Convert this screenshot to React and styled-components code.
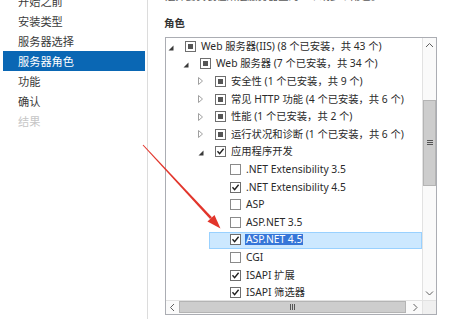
import React from "react";
import styled, { createGlobalStyle } from "styled-components";

const Global = createGlobalStyle`
  html, body { margin: 0; padding: 0; background: #ffffff; }
  body { overflow: hidden; font-family: "Noto Sans", "Noto Sans CJK SC", sans-serif; }
`;

const Page = styled.div`
  position: relative;
  width: 450px;
  height: 319px;
  overflow: hidden;
  display: flex;
  background: #fff;
`;

const Sidebar = styled.nav`
  width: 148px;
  flex: none;
  box-sizing: border-box;
  border-right: 1px solid #dcdcdc;
  padding: 0 2px 0 3px;
`;

const NavList = styled.ul`
  list-style: none;
  margin: -9px 0 0 0;
  padding: 0;
`;

const NavItem = styled.li`
  height: 20px;
  line-height: 20px;
  padding-left: 15px;
  font-family: "Noto Sans CJK SC", sans-serif;
  font-size: 11.2px;
  color: ${(p) => (p.$active ? "#ffffff" : p.$disabled ? "#c6c6c6" : "#3a3a3a")};
  background: ${(p) => (p.$active ? "#0a67b4" : "transparent")};
  white-space: nowrap;
`;

const Main = styled.main`
  flex: 1;
  min-width: 0;
  padding: 0 13px 0 17px;
  display: flex;
  flex-direction: column;
`;

const Desc = styled.div`
  margin-top: -11px;
  height: 14px;
  line-height: 14px;
  font-size: 10.3px;
  color: #5a5a5a;
  white-space: nowrap;
  overflow: hidden;
  font-family: "Noto Sans CJK SC", sans-serif;
`;

const Heading = styled.h3`
  margin: 12px 0 0 -1px;
  height: 16px;
  line-height: 16px;
  font-size: 10.5px;
  font-weight: 700;
  color: #333;
  font-family: "Noto Sans CJK SC", sans-serif;
`;

const TreeBox = styled.div`
  margin-top: 6px;
  width: 272px;
  height: 278px;
  box-sizing: border-box;
  border: 1px solid #abadb3;
  display: grid;
  grid-template-columns: 1fr 14px;
  grid-template-rows: 1fr 14px;
  overflow: hidden;
`;

const TreeView = styled.div`
  overflow: hidden;
  min-width: 0;
  min-height: 0;
`;

const Row = styled.div`
  height: 17.6px;
  box-sizing: border-box;
  display: flex;
  align-items: center;
  padding-bottom: 2px;
  margin-left: ${(p) => p.$level * 15 - 2}px;
  border: 1px solid ${(p) => (p.$selected ? "#99d1ff" : "transparent")};
  background: ${(p) => (p.$selected ? "#cce8ff" : "transparent")};
  white-space: nowrap;
`;

const Expander = styled.span`
  width: 20px;
  flex: none;
  display: flex;
  align-items: center;
  padding-left: 3px;
  box-sizing: border-box;
  height: 100%;
  padding-top: ${(p) => (p.$open ? "4px" : "1px")};
`;

const Check = styled.span`
  width: 11px;
  height: 11px;
  flex: none;
  box-sizing: border-box;
  border: 1px solid ${(p) => (p.$state === "off" ? "#8a8a8a" : "#6e6e6e")};
  background: #fff;
  display: flex;
  align-items: center;
  justify-content: center;
  margin: 1px 5px 0 0;
`;

const Mark = styled.span`
  width: 5px;
  height: 5px;
  background: #555;
`;

const Label = styled.span`
  font-size: 10.3px;
  color: #2a2a2a;
  line-height: 12px;
`;

const Selected = styled.span`
  display: inline-block;
  height: 11px;
  line-height: 11px;
  background: #3676d8;
  color: #fff;
  padding: 0 1px;
  margin-left: -1px;
`;

const VScroll = styled.div`
  display: flex;
  flex-direction: column;
  background: #fafafa;
  border-left: 1px solid #e2e2e2;
  box-sizing: border-box;
`;

const HScroll = styled.div`
  display: flex;
  background: #fafafa;
  border-top: 1px solid #e2e2e2;
  box-sizing: border-box;
`;

const Corner = styled.div`
  background: #f0f0f0;
  border-top: 1px solid #e2e2e2;
  border-left: 1px solid #e2e2e2;
`;

const ArrowBtn = styled.span`
  flex: none;
  width: ${(p) => (p.$vertical ? "100%" : "13px")};
  height: ${(p) => (p.$vertical ? "14px" : "100%")};
  display: flex;
  align-items: center;
  justify-content: center;
`;

const Track = styled.div`
  flex: 1;
  display: flex;
  flex-direction: ${(p) => (p.$vertical ? "column" : "row")};
  min-width: 0;
  min-height: 0;
`;

const Thumb = styled.div`
  box-sizing: border-box;
  background: #cdcdcd;
  border: 1px solid #b4b4b4;
  display: flex;
  align-items: center;
  justify-content: center;
  flex: none;
  ${(p) =>
    p.$vertical
      ? `width: 100%; height: ${p.$size}px; margin-top: ${p.$offset}px;`
      : `height: 12px; width: ${p.$size}px; margin: 0 0 0 ${p.$offset}px;`}
`;

const Overlay = styled.svg`
  position: absolute;
  left: 0;
  top: 0;
  pointer-events: none;
`;

const navItems = [
  { t: "开始之前" },
  { t: "安装类型" },
  { t: "服务器选择" },
  { t: "服务器角色", active: true },
  { t: "功能" },
  { t: "确认" },
  { t: "结果", disabled: true },
];

const rows = [
  { l: 0, e: "open", c: "ind", t: "Web 服务器(IIS) (8 个已安装，共 43 个)" },
  { l: 1, e: "open", c: "ind", t: "Web 服务器 (7 个已安装，共 34 个)" },
  { l: 2, e: "closed", c: "ind", t: "安全性 (1 个已安装，共 9 个)" },
  { l: 2, e: "closed", c: "ind", t: "常见 HTTP 功能 (4 个已安装，共 6 个)" },
  { l: 2, e: "closed", c: "ind", t: "性能 (1 个已安装，共 2 个)" },
  { l: 2, e: "closed", c: "ind", t: "运行状况和诊断 (1 个已安装，共 6 个)" },
  { l: 2, e: "open", c: "on", t: "应用程序开发" },
  { l: 3, c: "off", t: ".NET Extensibility 3.5" },
  { l: 3, c: "on", t: ".NET Extensibility 4.5" },
  { l: 3, c: "off", t: "ASP" },
  { l: 3, c: "off", t: "ASP.NET 3.5" },
  { l: 3, c: "on", t: "ASP.NET 4.5", sel: true },
  { l: 3, c: "off", t: "CGI" },
  { l: 3, c: "on", t: "ISAPI 扩展" },
  { l: 3, c: "on", t: "ISAPI 筛选器" },
];

function Tri({ open }) {
  if (open)
    return (
      <svg width="6" height="6" viewBox="0 0 6 6">
        <polygon points="5.5,0.5 5.5,5.5 0.5,5.5" fill="#3a3a3a" />
      </svg>
    );
  return (
    <svg width="5" height="8" viewBox="0 0 5 8">
      <polygon points="0.5,0.5 4.5,4 0.5,7.5" fill="none" stroke="#a0a0a0" strokeWidth="1" />
    </svg>
  );
}

function CheckBox({ state }) {
  return (
    <Check $state={state}>
      {state === "ind" && <Mark />}
      {state === "on" && (
        <svg width="9" height="9" viewBox="0 0 9 9">
          <polyline points="1.5,4.3 3.6,6.6 7.6,1.8" fill="none" stroke="#1e1e1e" strokeWidth="1.4" />
        </svg>
      )}
    </Check>
  );
}

function Chevron({ dir }) {
  const pts = {
    up: "1,5 4.5,1.5 8,5",
    down: "1,1.5 4.5,5 8,1.5",
    left: "5,1 1.5,4.5 5,8",
    right: "1.5,1 5,4.5 1.5,8",
  }[dir];
  const vert = dir === "up" || dir === "down";
  return (
    <svg width={vert ? 9 : 7} height={vert ? 7 : 9} viewBox={vert ? "0 0 9 7" : "0 0 7 9"}>
      <polyline points={pts} fill="none" stroke="#606060" strokeWidth="1" />
    </svg>
  );
}

function Grip({ vertical }) {
  return vertical ? (
    <svg width="6" height="6" viewBox="0 0 6 6">
      <path d="M0 0.5H6M0 2.5H6M0 4.5H6" stroke="#555" strokeWidth="1" />
    </svg>
  ) : (
    <svg width="6" height="6" viewBox="0 0 6 6">
      <path d="M0.5 0V6M2.5 0V6M4.5 0V6" stroke="#555" strokeWidth="1" />
    </svg>
  );
}

function RedArrow() {
  const sx = 143, sy = 145, tx = 220.5, ty = 228.5;
  const dx = tx - sx, dy = ty - sy;
  const len = Math.hypot(dx, dy);
  const ux = dx / len, uy = dy / len;
  const px = -uy, py = ux;
  const bx = tx - 14 * ux, by = ty - 14 * uy;
  const shaft = [
    [sx + 0.5 * px, sy + 0.5 * py],
    [bx + 1.3 * px, by + 1.3 * py],
    [bx - 1.3 * px, by - 1.3 * py],
    [sx - 0.5 * px, sy - 0.5 * py],
  ];
  const head = [
    [tx, ty],
    [bx + 4.8 * px, by + 4.8 * py],
    [bx - 4.8 * px, by - 4.8 * py],
  ];
  const s = (a) => a.map((p) => p.join(",")).join(" ");
  return (
    <Overlay width="450" height="319" viewBox="0 0 450 319">
      <polygon points={s(shaft)} fill="#e2352b" />
      <polygon points={s(head)} fill="#e2352b" />
    </Overlay>
  );
}

export default function App() {
  return (
    <Page>
      <Global />
      <Sidebar>
        <NavList>
          {navItems.map((n) => (
            <NavItem key={n.t} $active={n.active} $disabled={n.disabled}>
              {n.t}
            </NavItem>
          ))}
        </NavList>
      </Sidebar>
      <Main>
        <Desc>选择要安装在所选服务器上的一个或多个角色。</Desc>
        <Heading>角色</Heading>
        <TreeBox>
          <TreeView>
            {rows.map((r, i) => (
              <Row key={i} $level={r.l} $selected={r.sel}>
                <Expander $open={r.e === "open"}>{r.e && <Tri open={r.e === "open"} />}</Expander>
                <CheckBox state={r.c} />
                <Label>{r.sel ? <Selected>{r.t}</Selected> : r.t}</Label>
              </Row>
            ))}
          </TreeView>
          <VScroll>
            <ArrowBtn $vertical>
              <Chevron dir="up" />
            </ArrowBtn>
            <Track $vertical>
              <Thumb $vertical $size={86} $offset={48}>
                <Grip vertical />
              </Thumb>
            </Track>
            <ArrowBtn $vertical>
              <Chevron dir="down" />
            </ArrowBtn>
          </VScroll>
          <HScroll>
            <ArrowBtn>
              <Chevron dir="left" />
            </ArrowBtn>
            <Track>
              <Thumb $size={227} $offset={0}>
                <Grip />
              </Thumb>
            </Track>
            <ArrowBtn>
              <Chevron dir="right" />
            </ArrowBtn>
          </HScroll>
          <Corner />
        </TreeBox>
      </Main>
      <RedArrow />
    </Page>
  );
}
